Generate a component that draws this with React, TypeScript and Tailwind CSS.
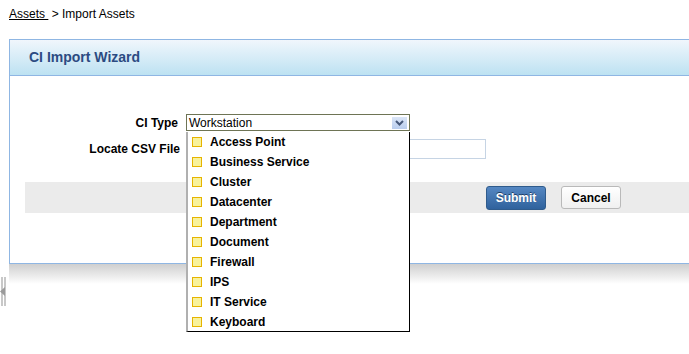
import React from "react";

const items = [
  "Access Point",
  "Business Service",
  "Cluster",
  "Datacenter",
  "Department",
  "Document",
  "Firewall",
  "IPS",
  "IT Service",
  "Keyboard",
];

export default function App() {
  return (
    <div
      className="relative w-[689px] h-[354px] overflow-hidden bg-white text-black"
      style={{ fontFamily: '"Liberation Sans", Arial, sans-serif' }}
    >
      {/* Breadcrumb */}
      <div className="pl-[9px] pt-[6px] h-[39px] text-[12px] leading-[16px]">
        <span className="underline">Assets&nbsp;</span>
        <span>&nbsp;&gt; Import Assets</span>
      </div>

      {/* Panel */}
      <div className="ml-[9px] w-[720px]">
        <div className="border border-[#8fb6e3] border-r-0">
          <div className="h-[36px] bg-gradient-to-b from-[#f0f6fc] to-[#bde2f2] border-b border-[#8fb6e3] flex items-center pl-[19px]">
            <span className="text-[14px] font-bold text-[#2c4b82]">CI Import Wizard</span>
          </div>
          <div className="bg-white h-[187px] pt-[38px]">
            <div className="flex items-center h-[17px]">
              <div className="w-[170px] text-right text-[12px] font-bold pr-[2px]">CI Type</div>
              <div className="ml-[6px] w-[224px] h-[17px] border border-[#6e7455] flex items-center justify-between">
                <span className="text-[12px] pl-[2px] leading-none">Workstation</span>
                <span className="mr-[2px] w-[15px] h-[12px] bg-gradient-to-b from-[#dbe6f7] to-[#b9cdee] flex items-center justify-center">
                  <svg width="9" height="6" viewBox="0 0 9 6">
                    <path d="M1 1 L4.5 4.5 L8 1" stroke="#46587a" strokeWidth="2" fill="none" />
                  </svg>
                </span>
              </div>
            </div>
            <div className="flex items-center mt-[8px] h-[20px]">
              <div className="w-[170px] text-right text-[12px] font-bold">Locate CSV File</div>
              <div className="ml-[6px] w-[300px] h-[20px] border border-[#c6d4e4] bg-white"></div>
            </div>
            <div className="ml-[15px] mt-[23px] h-[31px] bg-[#ebebeb] flex items-center">
              <button className="ml-[461px] w-[60px] h-[24px] rounded-[3px] border border-[#2f5b8c] bg-gradient-to-b from-[#5587c2] to-[#2f629d] text-white text-[12px] font-bold [text-shadow:0_-1px_0_#1f3f66]">
                Submit
              </button>
              <button className="ml-[15px] w-[60px] h-[23px] rounded-[3px] border border-[#b9b9b9] bg-gradient-to-b from-white to-[#f0f0f0] text-black text-[12px] font-bold">
                Cancel
              </button>
            </div>
          </div>
        </div>
        <div className="h-[20px] bg-gradient-to-b from-[#cfcfcf] to-white"></div>
      </div>

      {/* left splitter */}
      <div className="absolute left-0 top-[277px] w-[8px] h-[29px]">
        <div className="absolute left-[1px] top-0 w-[2px] h-[29px] bg-[#c8c8c8]"></div>
        <div className="absolute left-[4px] top-0 w-[2px] h-[29px] bg-[#c8c8c8]"></div>
        <svg className="absolute left-0 top-[10px]" width="5" height="9" viewBox="0 0 5 9">
          <path d="M0 4.5 L5 0 L5 9 Z" fill="#9a9a9a" />
        </svg>
      </div>

      {/* Dropdown list */}
      <div className="absolute left-[186px] top-[132px] w-[224px] h-[200px] bg-white border-l-2 border-l-[#b0b0b0] border-r border-r-black border-b border-b-black">
        {items.map((it) => (
          <div key={it} className="h-[20px] flex items-center">
            <span className="ml-[4px] w-[10px] h-[10px] border border-[#e6b400] bg-[#f8f29c]"></span>
            <span className="ml-[8px] text-[12px] font-bold">{it}</span>
          </div>
        ))}
      </div>
    </div>
  );
}
